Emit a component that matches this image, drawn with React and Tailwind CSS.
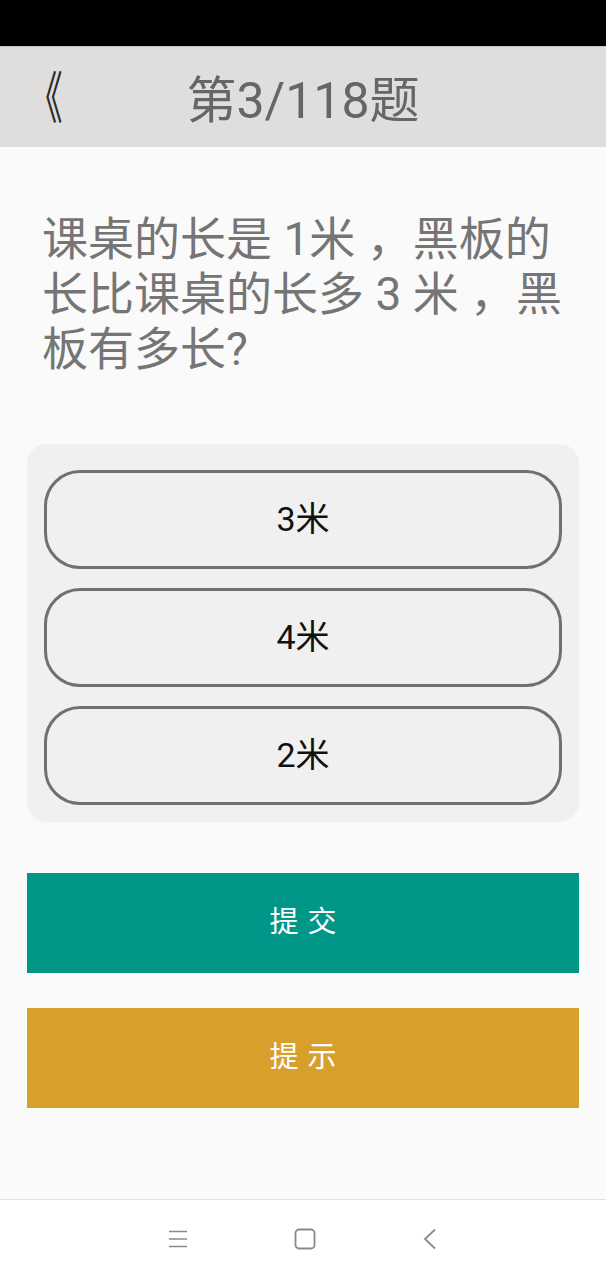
import React from "react";

const options = ["3米", "4米", "2米"];

function Option({ label }) {
  return (
    <button className="h-[99px] w-full rounded-[36px] border-[3px] border-[#707070] bg-[#f0f0f0] text-[34px] text-[#111]">
      {label}
    </button>
  );
}

export default function App() {
  return (
    <div
      className="flex h-screen flex-col bg-[#fafafa]"
      style={{ fontFamily: '"Roboto", "Noto Sans CJK SC", sans-serif' }}
    >
      {/* status bar */}
      <div className="h-[46px] bg-black" />

      {/* header */}
      <div className="relative flex h-[101px] items-center justify-center border-t border-[#c8c8c8] bg-[#dfdedc] pt-[8px]">
        <span className="absolute left-[28px] top-[24px] origin-left scale-x-[0.62] text-[56px] leading-none text-[#2a2a2a]">
          《
        </span>
        <h1 className="text-[50px] leading-none text-[#666]">第3/118题</h1>
      </div>

      <main className="flex-1 px-[27px]">
        <p className="mt-[65px] px-[15px] text-[46px] leading-[55px] text-[#757575]">
          课桌的长是 1米 ，黑板的长比课桌的长多 3 米 ，黑板有多长?
        </p>

        <div className="mt-[67px] flex flex-col gap-[19px] rounded-[20px] bg-[#f0f0f0] px-[17px] pb-[17px] pt-[26px]">
          {options.map((o) => (
            <Option key={o} label={o} />
          ))}
        </div>

        <button className="mt-[51px] h-[100px] w-full bg-[#009688] pl-[9px] text-[29px] tracking-[9px] text-white">
          提交
        </button>
        <button className="mt-[35px] h-[100px] w-full bg-[#d89f2c] pl-[9px] text-[29px] tracking-[9px] text-white">
          提示
        </button>
      </main>

      {/* navigation bar */}
      <div className="flex h-[81px] items-center justify-center gap-[106px] border-t border-[#e2e2e2] bg-white pb-[2px]">
        <svg width="20" height="18" viewBox="0 0 20 18" className="text-[#8a8a8a]">
          <path d="M1 1.5h18M1 9h18M1 16.5h18" stroke="currentColor" strokeWidth="1.6" />
        </svg>
        <svg width="22" height="22" viewBox="0 0 22 22" className="text-[#8a8a8a]">
          <rect x="1.5" y="1.5" width="19" height="19" rx="3.5" fill="none" stroke="currentColor" strokeWidth="1.8" />
        </svg>
        <svg width="16" height="22" viewBox="0 0 16 22" className="text-[#8a8a8a]">
          <path d="M13 1.5L3 11l10 9.5" fill="none" stroke="currentColor" strokeWidth="1.8" />
        </svg>
      </div>
    </div>
  );
}
